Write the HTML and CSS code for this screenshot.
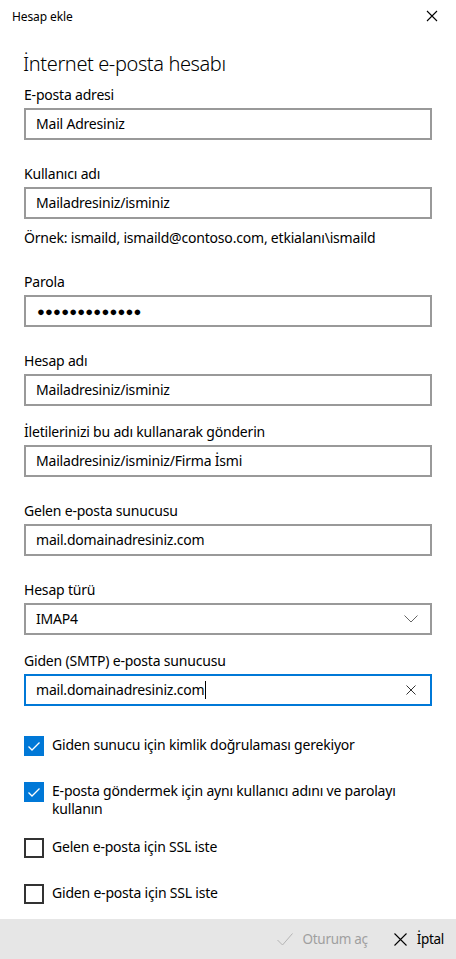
FILE: index.html
```html
<!DOCTYPE html>
<html lang="tr">
    <head>
        <meta charset="utf-8">
        <title>Hesap ekle</title>
        <link rel="stylesheet" href="styles.css">
    </head>
    <body>
        <div class="window">
            <header class="titlebar">
                <span class="titlebar-text">Hesap ekle</span>
                <span class="titlebar-close">
                    <svg width="12" height="12" viewBox="0 0 12 12"><path d="M1 1 L11 11 M11 1 L1 11" stroke="#000" stroke-width="1.1" fill="none"/></svg>
                </span>
            </header>

            <main class="form">
                <h1 class="form-title">İnternet e-posta hesabı</h1>

                <div class="field">
                    <label class="field-label">E-posta adresi</label>
                    <div class="textbox">Mail Adresiniz</div>
                </div>

                <div class="field">
                    <label class="field-label">Kullanıcı adı</label>
                    <div class="textbox">Mailadresiniz/isminiz</div>
                </div>
                <p class="hint">Örnek: ismaild, ismaild@contoso.com, etkialanı\ismaild</p>

                <div class="field field-after-hint">
                    <label class="field-label">Parola</label>
                    <div class="textbox password">●●●●●●●●●●●●●</div>
                </div>

                <div class="field">
                    <label class="field-label">Hesap adı</label>
                    <div class="textbox">Mailadresiniz/isminiz</div>
                </div>

                <div class="field tight">
                    <label class="field-label">İletilerinizi bu adı kullanarak gönderin</label>
                    <div class="textbox">Mailadresiniz/isminiz/Firma İsmi</div>
                </div>

                <div class="field">
                    <label class="field-label">Gelen e-posta sunucusu</label>
                    <div class="textbox">mail.domainadresiniz.com</div>
                </div>

                <div class="field">
                    <label class="field-label">Hesap türü</label>
                    <div class="textbox combo">
                        <span>IMAP4</span>
                        <svg width="14" height="8" viewBox="0 0 14 8"><path d="M0.5 0.5 L7 7 L13.5 0.5" stroke="#666" stroke-width="1" fill="none"/></svg>
                    </div>
                </div>

                <div class="field tight">
                    <label class="field-label">Giden (SMTP) e-posta sunucusu</label>
                    <div class="textbox focused">
                        <span>mail.domainadresiniz.com<span class="caret"></span></span>
                        <svg width="10" height="10" viewBox="0 0 10 10"><path d="M0.5 0.5 L9.5 9.5 M9.5 0.5 L0.5 9.5" stroke="#333" stroke-width="1" fill="none"/></svg>
                    </div>
                </div>

                <div class="checks">
                    <div class="check-row">
                        <span class="checkbox checked">
                            <svg width="20" height="20" viewBox="0 0 20 20"><path d="M4.5 10.5 L8 14 L15.5 6.5" stroke="#fff" stroke-width="1.3" fill="none"/></svg>
                        </span>
                        <span class="check-text">Giden sunucu için kimlik doğrulaması gerekiyor</span>
                    </div>
                    <div class="check-row">
                        <span class="checkbox checked">
                            <svg width="20" height="20" viewBox="0 0 20 20"><path d="M4.5 10.5 L8 14 L15.5 6.5" stroke="#fff" stroke-width="1.3" fill="none"/></svg>
                        </span>
                        <span class="check-text">E-posta göndermek için aynı kullanıcı adını ve parolayı kullanın</span>
                    </div>
                    <div class="check-row">
                        <span class="checkbox"></span>
                        <span class="check-text">Gelen e-posta için SSL iste</span>
                    </div>
                    <div class="check-row">
                        <span class="checkbox"></span>
                        <span class="check-text">Giden e-posta için SSL iste</span>
                    </div>
                </div>
            </main>

            <footer class="commandbar">
                <span class="command disabled">
                    <svg width="16" height="13" viewBox="0 0 16 13"><path d="M0.5 7 L5.5 12 L15.5 0.5" stroke="#b4b4b4" stroke-width="1" fill="none"/></svg>
                    Oturum aç
                </span>
                <span class="command">
                    <svg width="13" height="13" viewBox="0 0 13 13"><path d="M0.5 0.5 L12.5 12.5 M12.5 0.5 L0.5 12.5" stroke="#000" stroke-width="1.1" fill="none"/></svg>
                    İptal
                </span>
            </footer>
        </div>
    </body>
</html>
```

FILE: styles.css
```css
* {
    box-sizing: border-box;
}

body {
    margin: 0;
    background-color: #fff;
    color: #000;
    font-family: "Noto Sans", "Open Sans", sans-serif;
    font-size: 14px;
    letter-spacing: -0.2px;
}

.window {
    display: flex;
    flex-direction: column;
    height: 100vh;
}

.titlebar {
    display: flex;
    align-items: center;
    justify-content: space-between;
    height: 32px;
    padding: 0 18px 0 12px;
    font-size: 12px;
    letter-spacing: -0.1px;
}

.titlebar-close svg {
    display: block;
}

.form {
    flex: 1;
    overflow: hidden;
    padding: 0 24px;
}

.form-title {
    margin: 18px 0 7px -1px;
    font-size: 20px;
    font-weight: 300;
    line-height: 28px;
    letter-spacing: -0.4px;
}

.field + .field,
.field + .hint + .field {
    margin-top: 24px;
}

.field.tight {
    margin-top: 16px;
}

.field.field-after-hint {
    margin-top: 20px;
}

.field-label {
    display: block;
    line-height: 20px;
    margin-bottom: 3px;
}

.textbox {
    display: flex;
    align-items: center;
    justify-content: space-between;
    height: 32px;
    padding: 0 14px 0 10px;
    border: 2px solid #999;
    line-height: 20px;
    white-space: nowrap;
}

.textbox.password {
    font-size: 13px;
    letter-spacing: 0.2px;
    padding-left: 11px;
}

.textbox.focused {
    border-color: #0078d7;
}

.textbox.combo {
    padding-right: 12px;
}

.caret {
    display: inline-block;
    width: 1px;
    height: 18px;
    margin-left: 1px;
    background-color: #000;
    vertical-align: -4px;
}

.hint {
    margin: 9px 0 0 0;
    line-height: 20px;
}

.checks {
    margin-top: 24px;
}

.check-row {
    display: flex;
    align-items: flex-start;
    gap: 8px;
    min-height: 32px;
    padding-top: 6px;
}

.check-row + .check-row {
    margin-top: 14px;
}

.checkbox {
    flex: none;
    width: 20px;
    height: 20px;
    border: 2px solid #333;
}

.checkbox.checked {
    border: none;
    background-color: #0078d7;
}

.checkbox svg {
    display: block;
}

.check-text {
    line-height: 18px;
    padding-top: 0;
}

.commandbar {
    display: flex;
    justify-content: flex-end;
    align-items: center;
    gap: 26px;
    height: 40px;
    padding-right: 12px;
    background-color: #e6e6e6;
    font-size: 13.5px;
    letter-spacing: -0.3px;
}

.command {
    display: flex;
    align-items: center;
    gap: 10px;
}

.command.disabled {
    color: #a0a0a0;
}
```
